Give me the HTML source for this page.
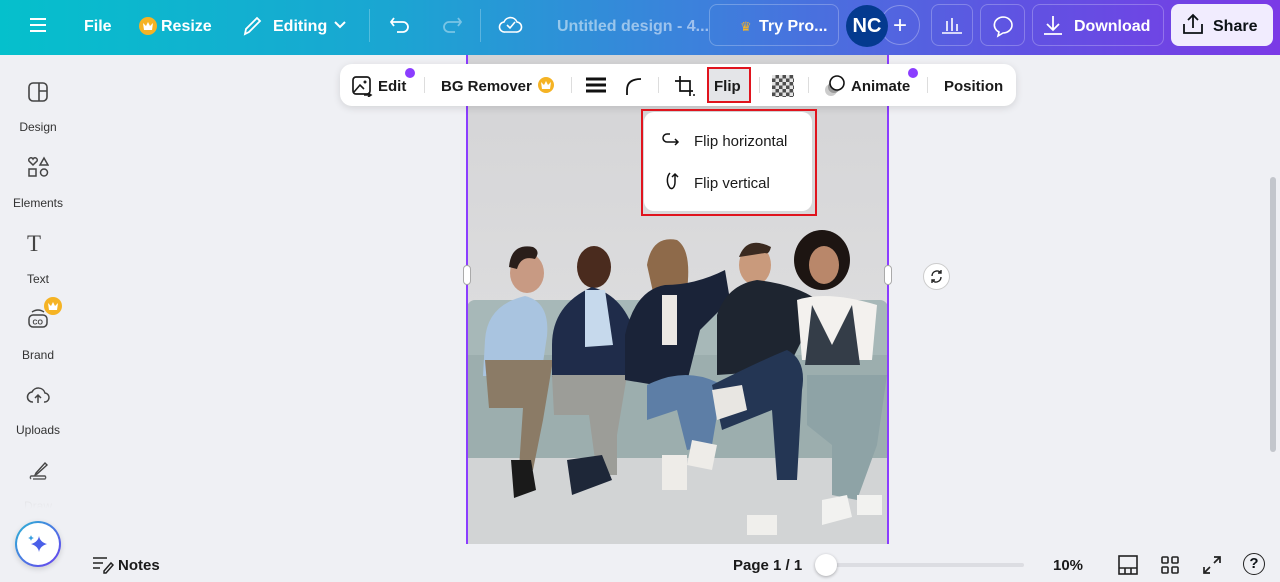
<!DOCTYPE html>
<html><head><meta charset="utf-8"><style>
*{box-sizing:border-box;margin:0;padding:0}
body{width:1280px;height:582px;overflow:hidden;background:#eff0f4;font-family:"Liberation Sans",sans-serif;position:relative;color:#0d1216}
.hdr{position:absolute;left:0;top:0;width:1280px;height:55px;background:linear-gradient(90deg,#05c0cc 0%,#1aa6d2 30%,#3d80dc 55%,#6052e2 80%,#7b3ae6 100%);color:#fff}
.hdr .t{position:absolute;top:18px;font-size:16px;font-weight:bold}
.btn{position:absolute;top:4px;height:42px;border:1px solid rgba(255,255,255,.25);border-radius:8px}
.abs{position:absolute}
.side{position:absolute;left:0;top:55px;width:76px;height:527px}
.side .l{position:absolute;width:76px;text-align:center;font-size:12px;color:#333}
.tb{position:absolute;left:340px;top:64px;width:676px;height:42px;background:#fff;border-radius:12px;box-shadow:0 2px 8px rgba(0,0,0,.12);font-size:15px;font-weight:bold;color:#1a1a1a}
.tb span{position:absolute;top:14px}
.sep{position:absolute;top:13px;width:1px;height:16px;background:#ddd}
.dot{position:absolute;width:10px;height:10px;border-radius:50%;background:#8b3dff}
</style></head><body>
<div class="hdr">
 <svg class="abs" style="left:29px;top:16px" width="18" height="18"><path d="M1 3h16M1 9h16M1 15h16" stroke="#fff" stroke-width="2"/></svg>
 <div class="t" style="left:84px">File</div>
 <div class="abs" style="left:139px;top:17px;width:18px;height:18px;border-radius:50%;background:#f5b324"></div>
 <svg class="abs" style="left:142px;top:21px" width="12" height="10"><path d="M1 2l3 3 2-4 2 4 3-3-1 7H2z" fill="#fff"/></svg>
 <div class="t" style="left:161px">Resize</div>
 <svg class="abs" style="left:242px;top:14px" width="22" height="22"><path d="M3 20l1-5L15 4l3 3L7 18z" fill="none" stroke="#fff" stroke-width="1.8"/></svg>
 <div class="t" style="left:273px">Editing</div>
 <svg class="abs" style="left:333px;top:20px" width="14" height="10"><path d="M2 2l5 5 5-5" fill="none" stroke="#fff" stroke-width="2"/></svg>
 <div class="abs" style="left:369px;top:9px;width:1px;height:33px;background:rgba(255,255,255,.25)"></div>
 <svg class="abs" style="left:389px;top:14px" width="24" height="22"><path d="M5 4L2 8l3 4M2 8h12a5 5 0 010 10H8" fill="none" stroke="#fff" stroke-width="1.8"/></svg>
 <svg class="abs" style="left:439px;top:14px" width="24" height="22"><path d="M19 4l3 4-3 4M22 8H10a5 5 0 000 10h6" fill="none" stroke="rgba(255,255,255,.4)" stroke-width="1.8"/></svg>
 <div class="abs" style="left:480px;top:9px;width:1px;height:33px;background:rgba(255,255,255,.25)"></div>
 <svg class="abs" style="left:498px;top:13px" width="26" height="22"><path d="M7 19a5 5 0 01-1-10 7 7 0 0113 0 5 5 0 01-1 10z M9 12l3 3 5-6" fill="none" stroke="#fff" stroke-width="1.6"/></svg>
 <div class="t" style="left:557px;color:rgba(255,255,255,.5)">Untitled design - 4...</div>
 <div class="btn" style="left:709px;width:130px"></div>
 <div class="abs" style="left:740px;top:19px;color:#f5b324;font-size:13px">♛</div>
 <div class="t" style="left:759px">Try Pro...</div>
 <div class="abs" style="left:880px;top:5px;width:40px;height:40px;border-radius:50%;border:1px solid rgba(255,255,255,.3)"></div>
 <div class="t" style="left:893px;top:12px;font-size:24px;font-weight:normal">+</div>
 <div class="abs" style="left:846px;top:5px;width:42px;height:42px;border-radius:50%;background:#043a8f;font-size:20px;font-weight:bold;text-align:center;line-height:42px">NC</div>
 <div class="btn" style="left:931px;width:42px"></div>
 <svg class="abs" style="left:940px;top:15px" width="24" height="20"><path d="M2 18h20M7 16V6M12 16V3M17 16V9" stroke="#fff" stroke-width="1.6"/></svg>
 <div class="btn" style="left:980px;width:45px"></div>
 <svg class="abs" style="left:990px;top:14px" width="26" height="24"><path d="M13 3a9 8 0 110 16l-5 3 1-4a9 8 0 014-15z" fill="none" stroke="#fff" stroke-width="1.6"/></svg>
 <div class="btn" style="left:1032px;width:132px"></div>
 <svg class="abs" style="left:1042px;top:13px" width="22" height="24"><path d="M11 3v13M5 11l6 6 6-6M2 21h18" fill="none" stroke="#fff" stroke-width="1.8"/></svg>
 <div class="t" style="left:1074px">Download</div>
 <div class="abs" style="left:1171px;top:4px;width:102px;height:42px;border-radius:8px;background:#f1ecfe"></div>
 <svg class="abs" style="left:1182px;top:12px" width="22" height="24"><path d="M11 16V3M6 8l5-5 5 5M2 12v9h18v-9" fill="none" stroke="#0d1216" stroke-width="1.8"/></svg>
 <div class="t" style="left:1213px;color:#0d1216">Share</div>
</div>

<div class="side">
 <svg class="abs" style="left:27px;top:26px" width="22" height="22"><rect x="2" y="2" width="18" height="18" rx="4" fill="none" stroke="#444" stroke-width="1.6"/><path d="M12 2v18M12 10h8" stroke="#444" stroke-width="1.6"/></svg>
 <div class="l" style="top:65px">Design</div>
 <svg class="abs" style="left:27px;top:101px" width="22" height="22"><path d="M6 9L2 5a2 2 0 014-2 2 2 0 014 2z M13 9l4-7 4 7z" fill="none" stroke="#444" stroke-width="1.5"/><rect x="2" y="13" width="7" height="7" fill="none" stroke="#444" stroke-width="1.5"/><circle cx="17" cy="16.5" r="3.5" fill="none" stroke="#444" stroke-width="1.5"/></svg>
 <div class="l" style="top:141px">Elements</div>
 <div class="abs" style="left:27px;top:176px;font-size:23px;font-family:'Liberation Serif',serif;color:#444">T</div>
 <div class="l" style="top:217px">Text</div>
 <svg class="abs" style="left:27px;top:253px" width="22" height="22"><rect x="2" y="7" width="18" height="12" rx="4" fill="none" stroke="#444" stroke-width="1.5"/><path d="M5 4q6-4 12 0" fill="none" stroke="#444" stroke-width="1.4"/><text x="5.5" y="16.5" font-size="7" font-family="Liberation Sans" font-weight="bold" fill="#444">CO</text></svg>
 <div class="abs" style="left:44px;top:242px;width:18px;height:18px;border-radius:50%;background:#f5b324"></div>
 <svg class="abs" style="left:47px;top:246px" width="12" height="10"><path d="M1 2l3 3 2-4 2 4 3-3-1 7H2z" fill="#fff"/></svg>
 <div class="l" style="top:293px">Brand</div>
 <svg class="abs" style="left:26px;top:329px" width="24" height="22"><path d="M7 18a5 5 0 01-1-10 7 7 0 0113 1 4.5 4.5 0 01-1 9M12 19v-8M9 14l3-3 3 3" fill="none" stroke="#444" stroke-width="1.5"/></svg>
 <div class="l" style="top:362px;top:368px">Uploads</div>
 <svg class="abs" style="left:27px;top:405px" width="22" height="22"><path d="M9 13l9-10 2 2-10 9-2 1zM4 19a2 2 0 010-3h14a2 2 0 010 3H6" fill="none" stroke="#444" stroke-width="1.4"/></svg>
 <div class="l" style="top:444px;color:#bbb">Draw</div>
 <div class="abs" style="left:0;top:418px;width:76px;height:60px;background:linear-gradient(rgba(239,240,244,0),#eff0f4 60%)"></div>
 <div class="abs" style="left:15px;top:466px;width:46px;height:46px;border-radius:50%;background:linear-gradient(135deg,#2ab6d4,#6a3df0);padding:2px;box-shadow:0 2px 6px rgba(0,0,0,.15)"><div style="width:42px;height:42px;border-radius:50%;background:#fff"></div></div>
 <svg class="abs" style="left:26px;top:478px" width="24" height="22"><path d="M13 3q1 6 8 8-7 2-8 8-1-6-8-8 7-2 8-8z" fill="#4a5fe8"/><path d="M5 2q.5 2.5 3 3-2.5.5-3 3-.5-2.5-3-3 2.5-.5 3-3z" fill="#3aa0e0"/></svg>
</div>

<svg class="abs" style="left:467px;top:55px" width="421" height="489" viewBox="0 0 421 489">
 <defs><linearGradient id="w" x1="0" y1="0" x2="0" y2="1"><stop offset="0" stop-color="#d4d4d6"/><stop offset="1" stop-color="#e3e3e4"/></linearGradient></defs>
 <rect width="421" height="489" fill="url(#w)"/>
 <rect y="400" width="421" height="89" fill="#d2d4d5"/>
 <rect y="245" width="421" height="158" rx="8" fill="#a7b8b8"/>
 <rect y="300" width="421" height="103" fill="#9caeae"/>
 <ellipse cx="60" cy="218" rx="17" ry="20" fill="#c89a83"/><path d="M42 212q2-24 24-20 8 4 2 12-14-4-18 10z" fill="#2a1e1a"/>
 <path d="M18 285q2-35 40-44 25 6 22 40l-6 40H16z" fill="#a9c4e0"/>
 <path d="M18 305h68l-10 60-10 50-14-2 4-60H22z" fill="#8b7b66"/>
 <path d="M44 405h20l5 30-22 8z" fill="#1a1a1a"/>
 <ellipse cx="127" cy="212" rx="17" ry="21" fill="#4a2b1e"/>
 <path d="M85 290q0-40 40-58 35 10 45 55l-10 35H85z" fill="#1f2c4a"/>
 <path d="M118 235l20 0 8 55-28 2z" fill="#c6d9ec"/>
 <path d="M85 320h75l-10 60 0 40-20 0-8-60-35 0z" fill="#9c9d98"/>
 <path d="M100 405l35-5 10 25-40 15z" fill="#1e2738"/>
 <ellipse cx="202" cy="210" rx="16" ry="20" fill="#d9ad93"/><path d="M180 210q5-30 30-25 15 10 10 50l-30 20z" fill="#8e6a4a"/>
 <path d="M158 280q10-45 40-50 30 0 60-15l5 30-30 30-15 60-60-10z" fill="#1a2338"/>
 <path d="M195 240h15v50h-15z" fill="#ece8e4"/>
 <path d="M180 330q40-20 75 0l-10 60-25 5-10-40-30 10z" fill="#5d7ea6"/>
 <path d="M195 400h25v35h-25zM225 385l25 5-5 25-25-5z" fill="#eeece8"/>
 <ellipse cx="288" cy="210" rx="16" ry="20" fill="#c99a7c"/><path d="M272 202q8-22 32-10-2 8-6 6z" fill="#3b2a20"/>
 <path d="M250 260q10-30 40-35 40 5 60 20l-10 30-20 40-70 5z" fill="#1e2530"/>
 <path d="M245 330q50-25 75-35 20 10 15 40l-5 90-20 0-5-70-50 20z" fill="#243654"/>
 <path d="M245 335l30-5 5 25-30 10z" fill="#e8e6e2"/>
 <path d="M280 460h30v20h-30z" fill="#f0efec"/>
 <ellipse cx="355" cy="205" rx="28" ry="30" fill="#1d1512"/><ellipse cx="357" cy="210" rx="15" ry="19" fill="#b9876a"/>
 <path d="M330 245q30-10 80 5l-5 55h-70z" fill="#f3f1ee"/>
 <path d="M345 250l20 40 20-40 8 60h-55z" fill="#343d48"/>
 <path d="M340 320h80l-10 70-20 55-25-5 0-50-25-20z" fill="#8ea3a6"/>
 <path d="M355 445l25-5 5 22-30 8zM390 440h25v20h-25z" fill="#f2f2f0"/>
</svg>
<div class="abs" style="left:466px;top:55px;width:2px;height:489px;background:#8b3dff"></div>
<div class="abs" style="left:887px;top:55px;width:2px;height:489px;background:#8b3dff"></div>
<div class="abs" style="left:463px;top:265px;width:8px;height:20px;border-radius:4px;background:#fff;border:1px solid #aaa"></div>
<div class="abs" style="left:884px;top:265px;width:8px;height:20px;border-radius:4px;background:#fff;border:1px solid #aaa"></div>
<div class="abs" style="left:923px;top:263px;width:27px;height:27px;border-radius:50%;background:#fff;border:1px solid #ccc"></div>
<svg class="abs" style="left:929px;top:269px" width="15" height="15"><path d="M3 7a5 5 0 019-3M12 8a5 5 0 01-9 3" fill="none" stroke="#222" stroke-width="1.4"/><path d="M12 1v3H9M3 14v-3h3" fill="none" stroke="#222" stroke-width="1.4"/></svg>
<div class="abs" style="left:1270px;top:177px;width:6px;height:275px;border-radius:3px;background:#c3c6cc"></div>

<div class="tb">
 <svg class="abs" style="left:11px;top:11px" width="22" height="22"><rect x="2" y="2" width="17" height="17" rx="3" fill="none" stroke="#1a1a1a" stroke-width="1.7"/><path d="M3 17l6-7 4 4M13 20h7M17 18l3 2-3 2" fill="none" stroke="#1a1a1a" stroke-width="1.6"/><circle cx="14" cy="7" r="1.5" fill="#1a1a1a"/></svg>
 <span style="left:38px">Edit</span><div class="dot" style="left:65px;top:4px"></div>
 <div class="sep" style="left:84px"></div>
 <span style="left:101px">BG Remover</span>
 <div class="abs" style="left:198px;top:13px;width:16px;height:16px;border-radius:50%;background:#f5b324"></div>
 <svg class="abs" style="left:200px;top:16px" width="12" height="10"><path d="M1 2l3 3 2-4 2 4 3-3-1 7H2z" fill="#fff"/></svg>
 <div class="sep" style="left:231px"></div>
 <svg class="abs" style="left:246px;top:13px" width="20" height="16"><path d="M0 2h20M0 8h20M0 14h20" stroke="#111" stroke-width="3"/></svg>
 <svg class="abs" style="left:284px;top:12px" width="20" height="20"><path d="M3 19V14Q3 3 17 3" fill="none" stroke="#111" stroke-width="1.8"/></svg>
 <div class="sep" style="left:318px"></div>
 <svg class="abs" style="left:334px;top:11px" width="22" height="22"><path d="M6 1v15h13M1 6h15v15" fill="none" stroke="#111" stroke-width="1.7"/><circle cx="20" cy="20" r="1" fill="#111"/></svg>
 <div class="abs" style="left:367px;top:3px;width:44px;height:36px;border:2px solid #e0141e;background:#e4e5e8"></div>
 <span style="left:374px">Flip</span>
 <div class="sep" style="left:419px"></div>
 <div class="abs" style="left:432px;top:11px;width:22px;height:22px;background:repeating-conic-gradient(#222 0 25%,#ddd 0 50%) 0 0/7px 7px;opacity:.8"></div>
 <div class="sep" style="left:468px"></div>
 <svg class="abs" style="left:482px;top:10px" width="26" height="24"><circle cx="9" cy="16" r="6" fill="#ccc"/><circle cx="12" cy="13" r="6" fill="#999"/><circle cx="15" cy="9" r="7" fill="#fff" stroke="#111" stroke-width="1.6"/></svg>
 <span style="left:511px">Animate</span><div class="dot" style="left:568px;top:4px"></div>
 <div class="sep" style="left:587px"></div>
 <span style="left:604px">Position</span>
</div>

<div class="abs" style="left:641px;top:109px;width:176px;height:107px;border:2px solid #e0141e"></div>
<div class="abs" style="left:644px;top:112px;width:168px;height:99px;background:#fff;border-radius:10px;font-size:15px;color:#1a1a1a">
 <svg class="abs" style="left:17px;top:19px" width="22" height="18"><path d="M9 3H6a4 4 0 000 8h11M14 8l3 3-3 3" fill="none" stroke="#111" stroke-width="1.5"/></svg>
 <div class="abs" style="left:50px;top:21px">Flip horizontal</div>
 <svg class="abs" style="left:20px;top:58px" width="18" height="24"><path d="M6 3c-3 3-4 10 0 15 3 2 5-2 5-6V4M8 7l3-3 3 3" fill="none" stroke="#111" stroke-width="1.5"/></svg>
 <div class="abs" style="left:50px;top:63px">Flip vertical</div>
</div>

<svg class="abs" style="left:92px;top:556px" width="22" height="18"><path d="M1 2h14M1 7h10M1 12h7M12 15l7-8 2 2-7 8h-2z" fill="none" stroke="#222" stroke-width="1.5"/></svg>
<div class="abs" style="left:118px;top:557px;font-size:15px;font-weight:bold;color:#1a1a1a">Notes</div>
<div class="abs" style="left:733px;top:557px;font-size:15px;font-weight:bold;color:#1a1a1a">Page 1 / 1</div>
<div class="abs" style="left:822px;top:563px;width:202px;height:4px;border-radius:2px;background:#dcdde2"></div>
<div class="abs" style="left:815px;top:554px;width:22px;height:22px;border-radius:50%;background:#fff;box-shadow:0 1px 3px rgba(0,0,0,.3)"></div>
<div class="abs" style="left:1053px;top:557px;font-size:15px;font-weight:bold;color:#1a1a1a">10%</div>
<svg class="abs" style="left:1117px;top:554px" width="22" height="22"><rect x="2" y="2" width="18" height="18" fill="none" stroke="#222" stroke-width="1.6"/><path d="M2 14h18M8 14v6M14 14v6" stroke="#222" stroke-width="1.6"/></svg>
<svg class="abs" style="left:1160px;top:555px" width="20" height="20"><rect x="2" y="2" width="6" height="6" rx="1" fill="none" stroke="#222" stroke-width="1.6"/><rect x="12" y="2" width="6" height="6" rx="1" fill="none" stroke="#222" stroke-width="1.6"/><rect x="2" y="12" width="6" height="6" rx="1" fill="none" stroke="#222" stroke-width="1.6"/><rect x="12" y="12" width="6" height="6" rx="1" fill="none" stroke="#222" stroke-width="1.6"/></svg>
<svg class="abs" style="left:1202px;top:555px" width="20" height="20"><path d="M12 2h6v6M18 2l-6 6M8 18H2v-6M2 18l6-6" fill="none" stroke="#222" stroke-width="1.7"/></svg>
<div class="abs" style="left:1243px;top:553px;width:22px;height:22px;border-radius:50%;border:1.7px solid #222;text-align:center;font-size:15px;font-weight:bold;line-height:19px">?</div>
</body></html>
